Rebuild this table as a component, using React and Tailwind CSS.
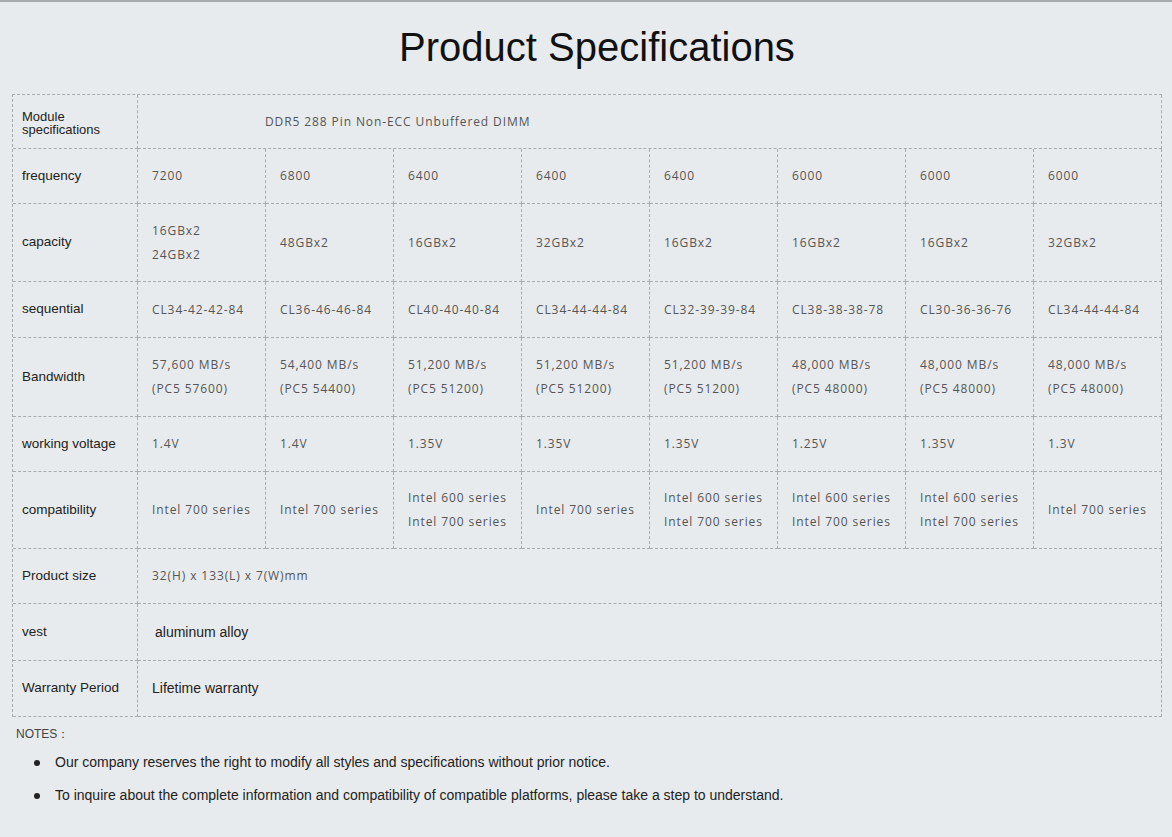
const cols = [
  { freq: "7200", cap: ["16GBx2", "24GBx2"], seq: "CL34-42-42-84", bw: ["57,600 MB/s", "(PC5 57600)"], volt: "1.4V", comp: ["Intel 700 series"] },
  { freq: "6800", cap: ["48GBx2"], seq: "CL36-46-46-84", bw: ["54,400 MB/s", "(PC5 54400)"], volt: "1.4V", comp: ["Intel 700 series"] },
  { freq: "6400", cap: ["16GBx2"], seq: "CL40-40-40-84", bw: ["51,200 MB/s", "(PC5 51200)"], volt: "1.35V", comp: ["Intel 600 series", "Intel 700 series"] },
  { freq: "6400", cap: ["32GBx2"], seq: "CL34-44-44-84", bw: ["51,200 MB/s", "(PC5 51200)"], volt: "1.35V", comp: ["Intel 700 series"] },
  { freq: "6400", cap: ["16GBx2"], seq: "CL32-39-39-84", bw: ["51,200 MB/s", "(PC5 51200)"], volt: "1.35V", comp: ["Intel 600 series", "Intel 700 series"] },
  { freq: "6000", cap: ["16GBx2"], seq: "CL38-38-38-78", bw: ["48,000 MB/s", "(PC5 48000)"], volt: "1.25V", comp: ["Intel 600 series", "Intel 700 series"] },
  { freq: "6000", cap: ["16GBx2"], seq: "CL30-36-36-76", bw: ["48,000 MB/s", "(PC5 48000)"], volt: "1.35V", comp: ["Intel 600 series", "Intel 700 series"] },
  { freq: "6000", cap: ["32GBx2"], seq: "CL34-44-44-84", bw: ["48,000 MB/s", "(PC5 48000)"], volt: "1.3V", comp: ["Intel 700 series"] },
];

const rows = [
  { label: "frequency", key: "freq", h: "h-[55px]" },
  { label: "capacity", key: "cap", h: "h-[78px]" },
  { label: "sequential", key: "seq", h: "h-[56px]" },
  { label: "Bandwidth", key: "bw", h: "h-[79px]" },
  { label: "working voltage", key: "volt", h: "h-[55px]" },
  { label: "compatibility", key: "comp", h: "h-[77px]" },
];

const cell = "border-r border-b border-dashed border-[#a9abad] flex items-center";
const labelCls = `${cell} pl-[9px] text-[13.5px] text-[#222] font-['Liberation_Sans',Arial,sans-serif]`;
const valueCls = `${cell} pl-[14px] text-[12px] tracking-[0.9px] text-[#555] font-['Open_Sans',sans-serif]`;

function Value({ v }) {
  const lines = Array.isArray(v) ? v : [v];
  return (
    <div className="flex flex-col leading-[24px]">
      {lines.map((l, i) => (
        <span key={i}>{l}</span>
      ))}
    </div>
  );
}

export default function App() {
  return (
    <div className="min-h-screen bg-[#e8ebed] border-t-2 border-[#a8abad] font-['Liberation_Sans',Arial,sans-serif]">
      <h1 className="text-center text-[40px] leading-[48px] pt-[21px] pb-[23px] pl-[22px] text-[#111]">
        Product Specifications
      </h1>

      <div className="ml-[12px] w-[1150px] grid grid-cols-[125px_repeat(8,128px)] border-l border-t border-dashed border-[#a9abad]">
        {/* module row */}
        <div className={`${cell} h-[54px] pl-[9px] pt-[2px] text-[13px] leading-[13px] text-[#222]`}>
          Module
          <br />
          specifications
        </div>
        <div className={`${cell} col-span-8 h-[54px] pl-[127px] text-[12px] tracking-[0.9px] text-[#555] font-['Open_Sans',sans-serif]`}>
          DDR5 288 Pin Non-ECC Unbuffered DIMM
        </div>

        {rows.map((r) => (
          <div key={r.key} className="contents">
            <div className={`${labelCls} ${r.h}`}>{r.label}</div>
            {cols.map((c, i) => (
              <div key={i} className={`${valueCls} ${r.h}`}>
                <Value v={c[r.key]} />
              </div>
            ))}
          </div>
        ))}

        <div className={`${labelCls} h-[55px]`}>Product size</div>
        <div className={`${valueCls} col-span-8 h-[55px]`}>32(H) x 133(L) x 7(W)mm</div>

        <div className={`${labelCls} h-[57px]`}>vest</div>
        <div className={`${cell} col-span-8 h-[57px] pl-[17px] text-[14px] text-[#222]`}>aluminum alloy</div>

        <div className={`${labelCls} h-[56px]`}>Warranty Period</div>
        <div className={`${cell} col-span-8 h-[56px] pl-[14px] text-[14px] text-[#222]`}>Lifetime warranty</div>
      </div>

      <div className="pl-[16px] pt-[8px] text-[12px] text-[#444]">NOTES：</div>
      <ul className="pl-[34px] pt-[11px] text-[14px] text-[#222] flex flex-col gap-[16px]">
        <li className="flex items-center gap-[15px] leading-[17px]">
          <span className="w-[6px] h-[6px] rounded-full bg-[#222]" />
          Our company reserves the right to modify all styles and specifications without prior notice.
        </li>
        <li className="flex items-center gap-[15px] leading-[17px]">
          <span className="w-[6px] h-[6px] rounded-full bg-[#222]" />
          To inquire about the complete information and compatibility of compatible platforms, please take a step to understand.
        </li>
      </ul>
    </div>
  );
}
